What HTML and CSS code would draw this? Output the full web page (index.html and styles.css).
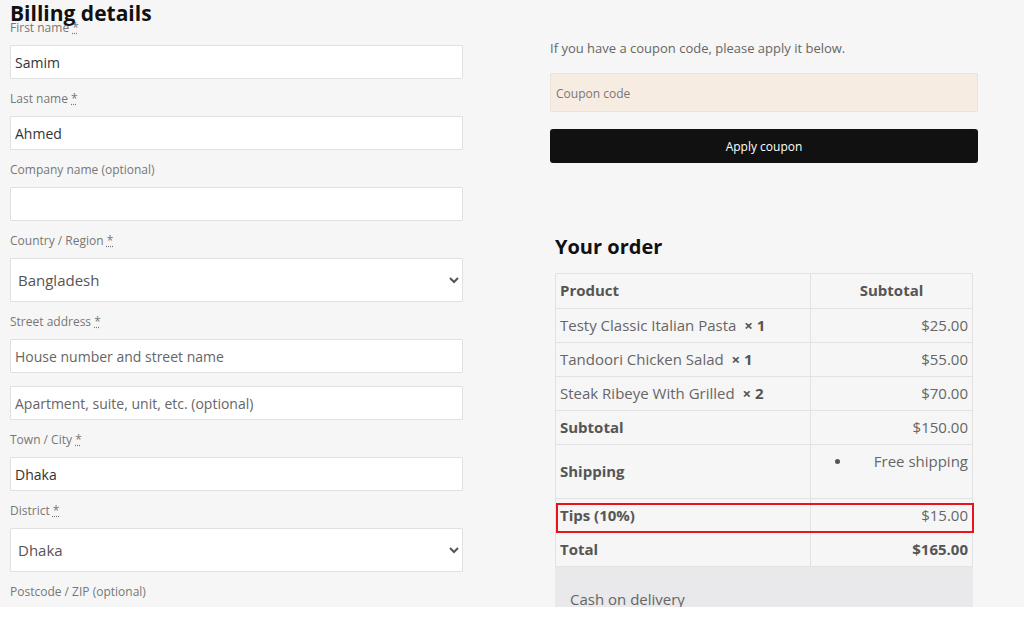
FILE: index.html
```html
<!DOCTYPE html>
<html lang="en">
<head>
    <meta charset="UTF-8">
    <meta name="viewport" content="width=device-width, initial-scale=1.0">
    <title>Checkout</title>
    <link rel="stylesheet" href="styles.css">
</head>
<body>
    <div class="page">
        <div class="checkout">
            <div class="billing">
                <h3 class="billing-title">Billing details</h3>
                <p class="field">
                    <label>First name <abbr title="required">*</abbr></label>
                    <input class="text-input" type="text" value="Samim">
                </p>
                <p class="field">
                    <label>Last name <abbr title="required">*</abbr></label>
                    <input class="text-input" type="text" value="Ahmed">
                </p>
                <p class="field">
                    <label>Company name (optional)</label>
                    <input class="text-input" type="text">
                </p>
                <p class="field">
                    <label>Country / Region <abbr title="required">*</abbr></label>
                    <select class="select-input">
                        <option>Bangladesh</option>
                    </select>
                </p>
                <p class="field">
                    <label>Street address <abbr title="required">*</abbr></label>
                    <input class="text-input" type="text" placeholder="House number and street name">
                    <input class="text-input second" type="text" placeholder="Apartment, suite, unit, etc. (optional)">
                </p>
                <p class="field">
                    <label>Town / City <abbr title="required">*</abbr></label>
                    <input class="text-input" type="text" value="Dhaka">
                </p>
                <p class="field">
                    <label>District <abbr title="required">*</abbr></label>
                    <select class="select-input">
                        <option>Dhaka</option>
                    </select>
                </p>
                <p class="field">
                    <label>Postcode / ZIP (optional)</label>
                    <input class="text-input" type="text">
                </p>
            </div>

            <div class="side">
                <div class="coupon">
                    <p class="coupon-note">If you have a coupon code, please apply it below.</p>
                    <input class="coupon-input" type="text" placeholder="Coupon code">
                    <button class="coupon-btn">Apply coupon</button>
                </div>

                <div class="order">
                    <h3 class="order-title">Your order</h3>
                    <div class="order-table-wrap">
                        <table class="order-table">
                            <thead>
                                <tr>
                                    <th class="col-product">Product</th>
                                    <th class="col-total">Subtotal</th>
                                </tr>
                            </thead>
                            <tbody>
                                <tr>
                                    <td>Testy Classic Italian Pasta&nbsp; <strong class="qty">× 1</strong></td>
                                    <td class="amount">$25.00</td>
                                </tr>
                                <tr>
                                    <td>Tandoori Chicken Salad&nbsp; <strong class="qty">× 1</strong></td>
                                    <td class="amount">$55.00</td>
                                </tr>
                                <tr>
                                    <td>Steak Ribeye With Grilled&nbsp; <strong class="qty">× 2</strong></td>
                                    <td class="amount">$70.00</td>
                                </tr>
                            </tbody>
                            <tfoot>
                                <tr>
                                    <th>Subtotal</th>
                                    <td class="amount">$150.00</td>
                                </tr>
                                <tr class="shipping">
                                    <th>Shipping</th>
                                    <td class="shipping-cell">
                                        <ul class="shipping-list">
                                            <li><span class="dot"></span>Free shipping</li>
                                        </ul>
                                    </td>
                                </tr>
                                <tr>
                                    <th>Tips (10%)</th>
                                    <td class="amount">$15.00</td>
                                </tr>
                                <tr>
                                    <th>Total</th>
                                    <td class="amount"><strong>$165.00</strong></td>
                                </tr>
                            </tfoot>
                        </table>
                        <div class="highlight"></div>
                    </div>
                    <div class="payment">
                        <p class="payment-name">Cash on delivery</p>
                    </div>
                </div>
            </div>
        </div>
    </div>
</body>
</html>
```

FILE: styles.css
```css
body {
    margin: 0;
    background: #fff;
    font-family: "Open Sans", "Liberation Sans", sans-serif;
    color: #666;
}
.page {
    height: 607px;
    overflow: hidden;
    background-color: #f6f6f6;
}
.checkout {
    display: flex;
    gap: 87px;
    padding-left: 10px;
}

/* levy sloupec */
.billing {
    width: 453px;
}
.billing-title {
    margin: 0 0 -6px;
    padding-top: 1px;
    font-size: 21px;
    line-height: 24px;
    font-weight: 700;
    color: #111;
}
.field {
    margin: 0 0 11px;
}
.field label {
    display: block;
    font-size: 12px;
    line-height: 18px;
    margin-bottom: 8px;
    color: #777;
}
.field abbr {
    text-decoration: underline dotted;
    color: #777;
}
.text-input {
    display: block;
    box-sizing: border-box;
    width: 100%;
    height: 34px;
    padding: 0 4px;
    border: 1px solid #e0e0e0;
    border-radius: 1px;
    background: #fff;
    font-family: inherit;
    font-size: 14px;
    color: #333;
    outline: none;
}
.text-input::placeholder {
    color: #666;
}
.text-input.second {
    margin-top: 13px;
}
.select-input {
    display: block;
    box-sizing: border-box;
    width: 100%;
    height: 44px;
    padding: 0 3px;
    border: 1px solid #e0e0e0;
    border-radius: 1px;
    background-color: #fff;
    font-family: inherit;
    font-size: 15px;
    color: #555;
}

/* pravy sloupec */
.side {
    width: 428px;
}
.coupon-note {
    margin: 38px 0 15px;
    font-size: 13px;
    line-height: 20px;
    color: #666;
}
.coupon-input {
    display: block;
    box-sizing: border-box;
    width: 100%;
    height: 39px;
    padding: 2px 5px 0;
    border: 1px solid #ebe3db;
    border-radius: 2px;
    background: #f7ece2;
    font-family: inherit;
    font-size: 12px;
    outline: none;
}
.coupon-input::placeholder {
    color: #777;
}
.coupon-btn {
    display: block;
    width: 100%;
    height: 34px;
    margin-top: 17px;
    border: none;
    border-radius: 3px;
    background-color: #111;
    color: #fff;
    font-family: inherit;
    font-size: 12px;
    cursor: pointer;
}

.order {
    padding: 0 5px;
}
.order-title {
    margin: 70px 0 12px;
    font-size: 20px;
    line-height: 28px;
    font-weight: 700;
    color: #111;
}
.order-table-wrap {
    position: relative;
}
.order-table {
    width: 100%;
    border-collapse: collapse;
    border: 1px solid #e2e2e2;
    font-size: 15px;
    line-height: 21px;
}
.order-table th,
.order-table td {
    border: 1px solid #e2e2e2;
    padding: 6px 4px;
    text-align: left;
    vertical-align: middle;
}
.order-table thead th {
    padding-bottom: 7px;
}
.order-table th {
    font-weight: 700;
    color: #555;
}
.order-table .col-product {
    width: 246px;
}
.order-table .col-total {
    text-align: center;
}
.order-table td.amount {
    text-align: right;
}
.qty {
    color: #555;
}
.order-table td strong {
    color: #555;
}
.order-table td.shipping-cell {
    vertical-align: top;
}
.shipping-list {
    list-style: none;
    margin: 0 0 20px;
    padding: 0 0 0 20px;
}
.shipping-list li {
    display: flex;
    align-items: center;
    justify-content: space-between;
}
.dot {
    width: 5px;
    height: 5px;
    border-radius: 50%;
    background-color: #555;
}
.highlight {
    position: absolute;
    left: 1px;
    top: 230px;
    width: 418px;
    height: 30px;
    box-sizing: border-box;
    border: 2px solid #e8131b;
}
.payment {
    background-color: #e9e8ea;
    padding: 22px 15px;
}
.payment-name {
    margin: 0;
    font-size: 15px;
    line-height: 21px;
    color: #666;
}
```
